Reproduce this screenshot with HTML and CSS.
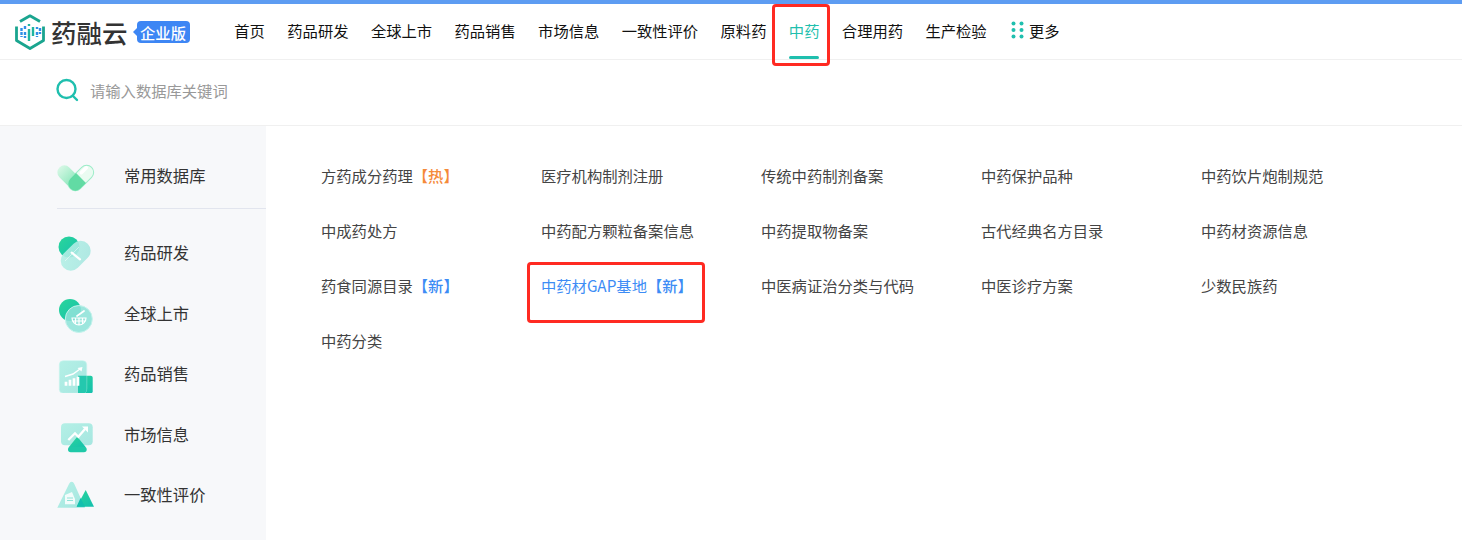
FILE: index.html
```html
<!DOCTYPE html>
<html lang="zh-CN">
<head>
<meta charset="utf-8">
<title>药融云</title>
<link rel="stylesheet" href="styles.css">
</head>
<body>
<svg class="defs" width="0" height="0">
  <defs>
    <linearGradient id="gDark" x1="0" y1="0" x2="1" y2="1"><stop offset="0" stop-color="#2bd69a"/><stop offset="1" stop-color="#14bfae"/></linearGradient>
    <linearGradient id="gLight" x1="0" y1="0" x2="1" y2="1"><stop offset="0" stop-color="#b4f0e6"/><stop offset="1" stop-color="#a6e6e0"/></linearGradient>
    <linearGradient id="gHeart" x1="0" y1="0" x2="1" y2="0"><stop offset="0" stop-color="#d6f8e5"/><stop offset="1" stop-color="#6fe0ab"/></linearGradient>
  </defs>
</svg>
<div class="page">
  <header class="topbar">
    <a class="logo">
      <svg class="logo-mark" width="32" height="38" viewBox="0 0 32 38">
        <path d="M2.500 13.500V27.500L16 35.500l13.500-8V13.500" fill="none" stroke="#1aa58f" stroke-width="2.800" stroke-linejoin="round"/>
        <path d="M6 8.500 16 2.800l10 5.700" fill="none" stroke="#1aa58f" stroke-width="2.800" stroke-linejoin="round"/>
        <g stroke-width="2.400">
          <path d="M7.500 15v9M11 13v3M11 19v6" stroke="#2f8fe6" stroke-dasharray="3 1"/>
          <path d="M15 11v2M15 16v12M19 14v9" stroke="#1fb5a0"/>
          <path d="M23 14v2M23 19v5M26 15v6" stroke="#2f8fe6" stroke-dasharray="3 1"/>
        </g>
      </svg>
      <span class="logo-name">药融云</span>
      <span class="badge">企业版</span>
    </a>
    <nav class="nav">
      <a class="nav-item">首页</a>
      <a class="nav-item">药品研发</a>
      <a class="nav-item">全球上市</a>
      <a class="nav-item">药品销售</a>
      <a class="nav-item">市场信息</a>
      <a class="nav-item">一致性评价</a>
      <a class="nav-item">原料药</a>
      <a class="nav-item is-active">中药</a>
      <a class="nav-item">合理用药</a>
      <a class="nav-item">生产检验</a>
      <a class="nav-item nav-more">
        <svg width="13" height="18" viewBox="0 0 13 18" fill="#1fbfae">
          <circle cx="2.500" cy="2.500" r="2"/><circle cx="10.500" cy="2.500" r="2"/>
          <circle cx="2.500" cy="9" r="2"/><circle cx="10.500" cy="9" r="2"/>
          <circle cx="2.500" cy="15.500" r="2"/><circle cx="10.500" cy="15.500" r="2"/>
        </svg>
        更多
      </a>
    </nav>
  </header>

  <div class="search">
    <svg width="24" height="26" viewBox="0 0 24 26" fill="none" stroke="#1fbfae" stroke-width="2.400" stroke-linecap="round">
      <circle cx="11.500" cy="11" r="9"/><path d="M18 18l4 4"/>
    </svg>
    <span class="search-text">请输入数据库关键词</span>
  </div>

  <main class="body">
    <aside class="side">
      <div class="side-row side-first">
        <svg class="side-icon" width="38" height="38" viewBox="0 0 38 38">
          <rect x="-2" y="16" width="30" height="14" rx="7" transform="rotate(45 13 23)" fill="url(#gHeart)"/>
          <g transform="rotate(-45 24 23)">
            <rect x="9" y="16" width="30" height="14" rx="7" fill="#e6fbef" fill-opacity=".8" stroke="#9cecc8"/>
            <path d="M24 16h-8a7 7 0 0 0 0 14h8Z" fill="#55d79c" fill-opacity=".9"/>
            <path d="M28 19.500h7" stroke="#fff" stroke-width="3.500" stroke-linecap="round"/>
          </g>
        </svg>
        <span>常用数据库</span>
      </div>
      <div class="side-row side-r2">
        <svg class="side-icon" width="38" height="38" viewBox="0 0 38 38">
          <circle cx="12" cy="13" r="10.500" fill="url(#gDark)"/>
          <rect x="1.700" y="11.700" width="34" height="20" rx="10" transform="rotate(-45 18.700 21.700)" fill="url(#gLight)" fill-opacity=".9"/>
          <path d="M14.700 18.700 23 25.300" stroke="#fff" stroke-width="2.200" stroke-linecap="round"/>
          <path d="M8 27 22 13" stroke="#fff" stroke-width=".8" stroke-opacity=".6"/>
        </svg>
        <span>药品研发</span>
      </div>
      <div class="side-row side-r3">
        <svg class="side-icon" width="38" height="38" viewBox="0 0 38 38">
          <circle cx="13" cy="15" r="11" fill="url(#gDark)"/>
          <circle cx="21.800" cy="24" r="13.500" fill="#8fe2d8" fill-opacity=".88" stroke="#c4f3ec"/>
          <path d="M15 23h14a7 7 0 0 1-14 0ZM18.500 23v6M22 23v7M25.500 23v6M15.500 26h13" fill="none" stroke="#fff" stroke-width="1.200"/>
          <path d="M20 21 27 16" stroke="#fff" stroke-width="1.800" stroke-linecap="round"/>
        </svg>
        <span>全球上市</span>
      </div>
      <div class="side-row side-r4">
        <svg class="side-icon" width="38" height="38" viewBox="0 0 38 38">
          <rect x="21" y="20.700" width="14.700" height="17.500" rx="2" fill="url(#gDark)"/>
          <rect x="2.300" y="5.700" width="27.400" height="32.500" rx="4" fill="url(#gLight)" stroke="#c8f5ee" stroke-width=".6"/>
          <path d="M21 20.700h8.700v14a3.500 3.500 0 0 1-3.500 3.500H21Z" fill="#24c8ae"/>
          <path d="M9 30.700v-4M13 30.700v-6M17 30.700v-7.500M21 30.700v-9" stroke="#fff" stroke-width="2.700"/>
          <path d="M8 21.500 16 19l7-5" stroke="#fff" stroke-width="1.400" fill="none"/>
          <path d="M20.500 13 25.500 12l-1 4.500Z" fill="#fff"/>
        </svg>
        <span>药品销售</span>
      </div>
      <div class="side-row side-r5">
        <svg class="side-icon" width="38" height="38" viewBox="0 0 38 38">
          <rect x="4" y="7.300" width="31.700" height="22" rx="4" fill="url(#gLight)"/>
          <path d="M20.300 20.700 29 31.500H11.500Z" fill="url(#gDark)"/>
          <rect x="11" y="30.700" width="18.700" height="5.600" rx="2.800" fill="#1fc9a8"/>
          <path d="M11.300 24 18 17.300l3.300 3.400 6.700-7.700" fill="none" stroke="#fff" stroke-width="2.300"/>
          <path d="M25 10.500h6v6Z" fill="#fff"/>
        </svg>
        <span>市场信息</span>
      </div>
      <div class="side-row side-r6">
        <svg class="side-icon" width="38" height="38" viewBox="0 0 38 38">
          <path d="M14.700 5.700Q16.300 5.700 17.300 8L28 31.700H.3L12 8Q13 5.700 14.700 5.700Z" fill="url(#gLight)"/>
          <path d="M28.700 14 37 30.700H19.700Z" fill="url(#gDark)"/>
          <path d="M19.700 30.700H28L23.500 22Z" fill="#14bfae"/>
          <path d="M8 19 15 16l3 7v5.300H8Z" fill="#fff" fill-opacity=".85"/>
          <path d="M10 22h6M10 24.500h6" stroke="#8fe3d8" stroke-width="1"/>
        </svg>
        <span>一致性评价</span>
      </div>
    </aside>
    <section class="grid">
      <a class="cell">方药成分药理<em class="hot">【热】</em></a>
      <a class="cell">医疗机构制剂注册</a>
      <a class="cell">传统中药制剂备案</a>
      <a class="cell">中药保护品种</a>
      <a class="cell">中药饮片炮制规范</a>
      <a class="cell">中成药处方</a>
      <a class="cell">中药配方颗粒备案信息</a>
      <a class="cell">中药提取物备案</a>
      <a class="cell">古代经典名方目录</a>
      <a class="cell">中药材资源信息</a>
      <a class="cell">药食同源目录<em class="new">【新】</em></a>
      <a class="cell cell-on">中药材GAP基地<em class="new">【新】</em></a>
      <a class="cell">中医病证治分类与代码</a>
      <a class="cell">中医诊疗方案</a>
      <a class="cell">少数民族药</a>
      <a class="cell">中药分类</a>
    </section>
  </main>
  <div class="mark mark-nav"></div>
  <div class="mark mark-cell"></div>
</div>
</body>
</html>
```

FILE: styles.css
```css
* { box-sizing: border-box; }
html, body { margin: 0; padding: 0; }
body {
  font-family: "Noto Sans CJK SC", "Liberation Sans", sans-serif;
  color: #333;
  background: #fff;
  overflow: hidden;
}
.defs { position: absolute; }
.page { position: relative; width: 1462px; height: 540px; overflow: hidden; }

.topbar {
  display: flex;
  align-items: center;
  height: 60px;
  border-top: 4px solid #5d9cf2;
  border-bottom: 1px solid #f0f0f0;
  padding-left: 14px;
}
.logo { display: flex; align-items: center; width: 220.300px; flex: none; }
.logo-mark { flex: none; }
.logo-name { font-size: 25.500px; line-height: 30px; margin-left: 5px; color: #333; font-weight: 500; }
.badge {
  position: relative;
  margin-left: 9px;
  background: #3d86f4;
  color: #fff;
  font-size: 15.300px;
  line-height: 22px;
  height: 22px;
  width: 53px;
  text-align: center;
  border-radius: 4px;
  font-weight: 500;
}
.badge::before {
  content: "";
  position: absolute;
  left: -4px;
  top: 7px;
  border: 4px solid transparent;
  border-left: 0;
  border-right-color: #3d86f4;
}
.nav { display: flex; height: 55px; gap: 22.400px; }
.nav-item {
  display: flex;
  align-items: center;
  position: relative;
  font-size: 15.300px;
  color: #111;
  white-space: nowrap;
  padding-bottom: 4px;
}
.is-active { color: #1fbfae; }
.is-active::after {
  content: "";
  position: absolute;
  left: 0;
  right: 0;
  bottom: 0;
  height: 3px;
  border-radius: 2px;
  background: #1fbfae;
}
.nav-more svg { margin: 0 5px 0 2px; }

.search {
  display: flex;
  align-items: center;
  height: 66px;
  border-bottom: 1px solid #f0f0f0;
  padding-left: 55px;
  padding-bottom: 3px;
}
.search-text { margin: 0 0 2px 11px; font-size: 15.300px; color: #999; }

.body { display: flex; height: 415px; }
.side { width: 266px; flex: none; background: #f7f8fa; padding-left: 57px; }
.side-row { display: flex; align-items: center; font-size: 16.300px; color: #333; position: relative; padding-left: 67px; }
.side-icon { position: absolute; left: 0; top: 50%; transform: translateY(-50%); }
.side-first { height: 83px; border-bottom: 1px solid #e2e5ee; padding-top: 15px; }
.side-first .side-icon { top: 59%; }
.side-r2 { height: 61px; margin-top: 13.400px; padding-bottom: 2px; }
.side-r3, .side-r4, .side-r5, .side-r6 { height: 60.500px; padding-bottom: 2px; }

.grid {
  display: grid;
  grid-template-columns: repeat(5, 220px);
  grid-auto-rows: 55px;
  padding: 21px 0 0 55px;
  align-content: start;
}
.cell { display: flex; align-items: center; font-size: 15.300px; color: #444; white-space: nowrap; height: 55px; }
.cell em { font-style: normal; font-weight: 500; }
.cell-on { color: #3d8cf5; }
.hot { color: #f58a3a; }
.new { color: #3d8cf5; }

.mark {
  position: absolute;
  border: 3px solid #ff2a22;
  border-radius: 4px;
  pointer-events: none;
}
.mark-nav { left: 772px; top: 4px; width: 58px; height: 62px; }
.mark-cell { left: 527px; top: 262px; width: 178px; height: 61px; }
```
